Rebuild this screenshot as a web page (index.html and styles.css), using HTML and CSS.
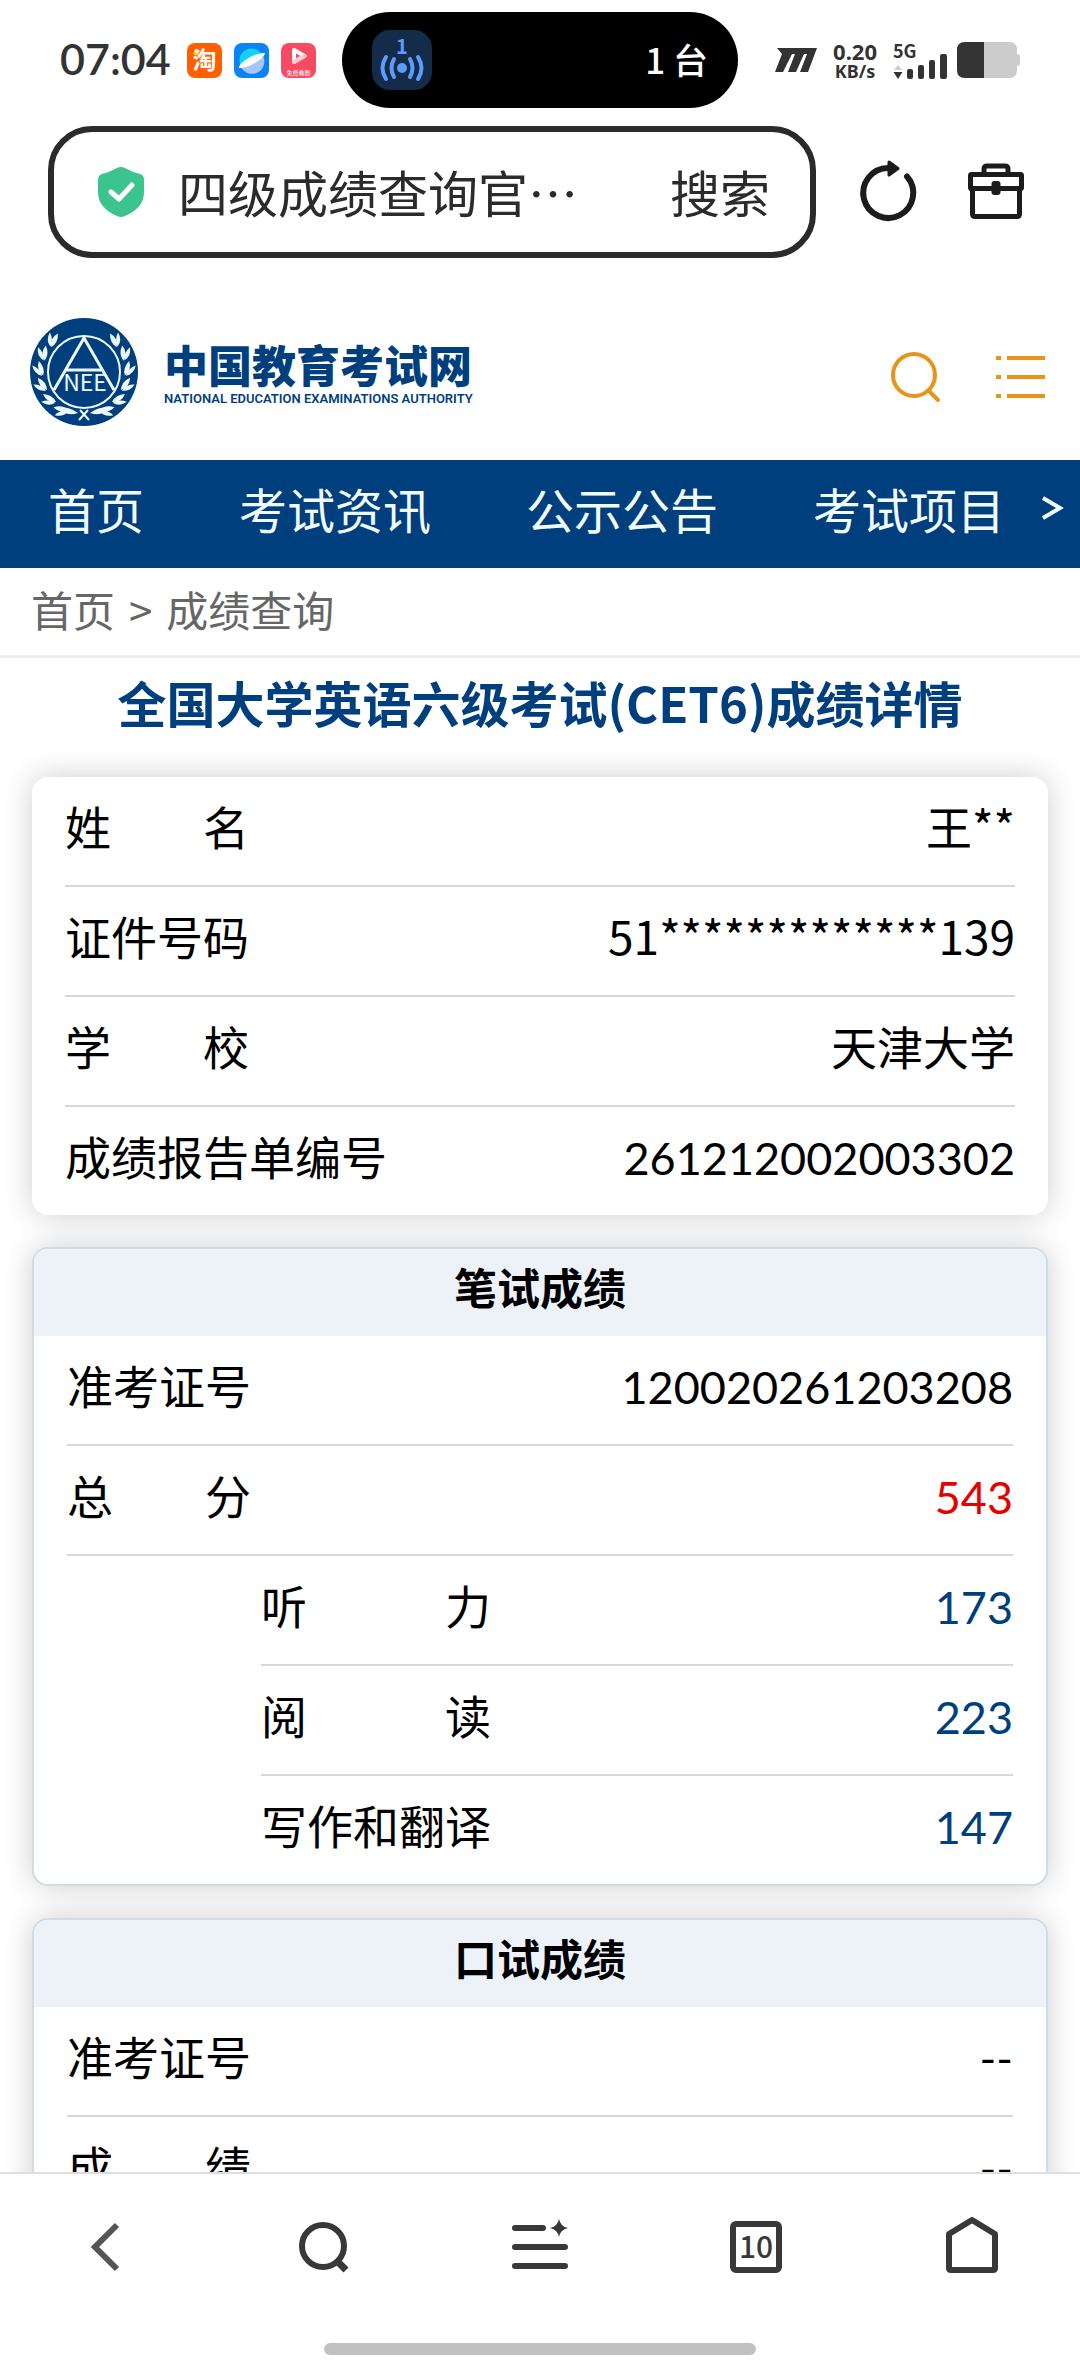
FILE: index.html
```
<!DOCTYPE html>
<html lang="zh-CN">
<head>
    <meta charset="UTF-8">
    <title>成绩查询 - 中国教育考试网</title>
    <meta name="viewport" content="width=device-width, initial-scale=1.0">
    <link rel="stylesheet" href="styles.css">
</head>
<body>
    <!-- =========================
         Phone status bar
    ========================== -->
    <div class="status-bar">
        <div class="status-left">
            <span class="clock">07:04</span>
            <svg class="app-icon" viewBox="0 0 35 35">
                <rect width="35" height="35" rx="8" fill="#ff5f00"/>
                <circle cx="9" cy="10" r="2.5" fill="#ffd400"/>
                <text x="17.5" y="26" font-size="24" font-weight="700" text-anchor="middle" fill="#fff">淘</text>
            </svg>
            <svg class="app-icon" viewBox="0 0 35 35">
                <rect width="35" height="35" rx="8" fill="#0a84f5"/>
                <circle cx="17.5" cy="17.5" r="12" fill="#12d3f5"/>
                <path d="M7 24 L29 13 A12 12 0 0 1 7 24Z" fill="#a4c8fb"/>
                <path d="M5 25 C4 20 22 9 31 10 C31 15 14 26 5 25Z" fill="#fff"/>
            </svg>
            <svg class="app-icon" viewBox="0 0 35 35">
                <rect width="35" height="35" rx="8" fill="#f84a62"/>
                <path d="M13 7 L23.500 13 L13 19Z" fill="none" stroke="#fff" stroke-width="4" stroke-linejoin="round"/>
                <path d="M13 19 L23 13" stroke="#fcc" stroke-width="4" stroke-linecap="round"/>
                <text x="17.5" y="32" font-size="6" text-anchor="middle" fill="#fff">免费看剧</text>
            </svg>
        </div>
        <div class="island">
            <svg class="hotspot" viewBox="0 0 60 60">
                <rect width="60" height="60" rx="18" fill="#142b49"/>
                <text x="30" y="24" font-size="20" font-weight="700" text-anchor="middle" fill="#5b9dfb">1</text>
                <circle cx="30" cy="38" r="5" fill="#5b9dfb"/>
                <g fill="none" stroke="#5b9dfb" stroke-width="4" stroke-linecap="round">
                    <path d="M22 29 Q17 38 22 47"/>
                    <path d="M14 27 Q7 38 14 49"/>
                    <path d="M38 29 Q43 38 38 47"/>
                    <path d="M46 27 Q53 38 46 49"/>
                </g>
            </svg>
            <span>1 台</span>
        </div>
        <div class="status-right">
            <svg class="m-icon" viewBox="0 0 42 24">
                <path d="M2 0 H42 L33 24 H25 L32 6 H29 L21 24 H13 L20 6 H17 L8 24 H0 L7 6Z" fill="#333"/>
            </svg>
            <div class="net-speed"><b>0.20</b><small>KB/s</small></div>
            <div class="signal">
                <small>5G</small>
                <svg viewBox="0 0 54 26">
                    <path d="M5 12 L9 17 H1Z" fill="#ccc"/>
                    <path d="M0.500 19 H9.500 L5 26Z" fill="#333"/>
                    <g fill="#333">
                        <rect x="14" y="16" width="6" height="10" rx="2"/>
                        <rect x="25" y="12" width="6" height="14" rx="2"/>
                        <rect x="36" y="7" width="6" height="19" rx="2"/>
                        <rect x="47" y="1" width="7" height="25" rx="2"/>
                    </g>
                </svg>
            </div>
            <svg class="battery" viewBox="0 0 63 36">
                <path d="M27 0 H52 Q60 0 60 8 V28 Q60 36 52 36 H27Z" fill="#ccc"/>
                <path d="M27 0 H8 Q0 0 0 8 V28 Q0 36 8 36 H27Z" fill="#333"/>
                <path d="M60 12 Q63 12 63 15 V21 Q63 24 60 24Z" fill="#ccc"/>
            </svg>
        </div>
    </div>

    <!-- =========================
         Browser address bar
    ========================== -->
    <form class="address-row" onsubmit="return false">
        <div class="address-box">
            <svg class="shield" viewBox="0 0 46 50">
                <path d="M19 1 Q23 -1 27 1 Q34 5 42 7 Q46 8 46 13 V25 Q46 41 27 49 Q23 51 19 49 Q0 41 0 25 V13 Q0 8 4 7 Q12 5 19 1Z" fill="#3cc48f"/>
                <path d="M13 25 L21 32 L34 18" fill="none" stroke="#fff" stroke-width="5" stroke-linecap="round" stroke-linejoin="round"/>
            </svg>
            <input class="address-input" type="text" value="四级成绩查询官…" aria-label="地址">
            <button class="search-btn" type="submit">搜索</button>
        </div>
        <button class="icon-btn" type="button" aria-label="刷新">
            <svg viewBox="0 0 60 60">
                <path d="M47 14.500 A25 25 0 1 1 28 6" fill="none" stroke="#1c1c1c" stroke-width="6" stroke-linecap="round"/>
                <path d="M29 0 L38 6.500 L29 13Z" fill="#1c1c1c" stroke="#1c1c1c" stroke-width="3" stroke-linejoin="round"/>
            </svg>
        </button>
        <button class="icon-btn" type="button" aria-label="工具箱">
            <svg viewBox="0 0 60 60" fill="none" stroke="#1c1c1c" stroke-width="5" stroke-linejoin="round">
                <path d="M20 12 V7 Q20 4 23 4 H41 Q44 4 44 7 V12"/>
                <rect x="6.500" y="12.500" width="51" height="14" rx="1"/>
                <path d="M8.500 27 V52 Q8.500 54.500 11 54.500 H53 Q55.500 54.500 55.500 52 V27"/>
                <rect x="27.500" y="19" width="9" height="14" rx="3" fill="#1c1c1c" stroke="none"/>
            </svg>
        </button>
    </form>

    <!-- =========================
         Site page
    ========================== -->
    <div class="page">
        <header class="site-header">
            <a class="brand" href="#">
                <svg class="emblem" viewBox="0 0 108 108">
                    <defs>
                        <g id="leaf" fill="#eef8ff">
                            <path d="M54 13 Q60 6 69 10 Q62 16 54 13Z"/>
                            <path d="M54 12 Q56 4 65 3 Q62 10 54 12Z"/>
                        </g>
                        <g id="branch">
                            <use href="#leaf" transform="rotate(22 54 54)"/>
                            <use href="#leaf" transform="rotate(43 54 54)"/>
                            <use href="#leaf" transform="rotate(64 54 54)"/>
                            <use href="#leaf" transform="rotate(85 54 54)"/>
                            <use href="#leaf" transform="rotate(106 54 54)"/>
                            <use href="#leaf" transform="rotate(127 54 54)"/>
                        </g>
                    </defs>
                    <circle cx="54" cy="54" r="54" fill="#003f7e"/>
                    <g transform="matrix(1 0 0 -1 0 108)">
                        <use href="#branch"/>
                        <use href="#branch" transform="matrix(-1 0 0 1 108 0)"/>
                    </g>
                    <g fill="none" stroke="#eef8ff" stroke-width="2">
                        <circle cx="54" cy="54" r="36"/>
                        <path d="M24 72 L54 20 L84 72" stroke-width="3"/>
                        <path d="M36 52 H72" stroke-width="3"/>
                        <path d="M49 102 L58 92 M59 102 L50 92"/>
                    </g>
                    <path d="M28 90 Q38 88 48 95 Q36 99 28 90Z M80 90 Q70 88 60 95 Q72 99 80 90Z" fill="#eef8ff"/>
                    <text x="55" y="73" font-size="23" text-anchor="middle" fill="#eef8ff">NEE</text>
                </svg>
                <span class="brand-text">
                    <span class="brand-cn">中国教育考试网</span>
                    <span class="brand-en">NATIONAL EDUCATION EXAMINATIONS AUTHORITY</span>
                </span>
            </a>
            <div class="header-tools">
                <button class="tool-btn" type="button" aria-label="搜索">
                    <svg viewBox="0 0 50 50" fill="none" stroke="#e8931c" stroke-width="4" stroke-linecap="round">
                        <circle cx="24" cy="23" r="21"/>
                        <path d="M39 39 L48 48"/>
                    </svg>
                </button>
                <button class="tool-btn" type="button" aria-label="菜单">
                    <svg viewBox="0 0 50 50" fill="none" stroke="#e8931c" stroke-width="4">
                        <path d="M0 6 H5 M0 25 H5 M0 44 H5 M11 6 H49 M11 25 H49 M11 44 H49"/>
                    </svg>
                </button>
            </div>
        </header>

        <nav class="site-nav">
            <a href="#">首页</a>
            <a href="#">考试资讯</a>
            <a href="#">公示公告</a>
            <a href="#">考试项目</a>
            <button class="nav-more" type="button" aria-label="更多">
                <svg viewBox="0 0 20 24"><path d="M1 2 L18 12 L1 22" fill="none" stroke="#f2fbff" stroke-width="4"/></svg>
            </button>
        </nav>

        <div class="breadcrumb">
            <a href="#">首页</a>
            <span>&gt;</span>
            <a href="#">成绩查询</a>
        </div>

        <main class="result">
            <h1>全国大学英语六级考试(CET6)成绩详情</h1>

            <dl class="card">
                <div class="row"><dt>姓&#12288;&#12288;名</dt><dd>王**</dd></div>
                <div class="row"><dt>证件号码</dt><dd>51*************139</dd></div>
                <div class="row"><dt>学&#12288;&#12288;校</dt><dd>天津大学</dd></div>
                <div class="row"><dt>成绩报告单编号</dt><dd class="number">261212002003302</dd></div>
            </dl>

            <section class="card card-score">
                <h2>笔试成绩</h2>
                <dl>
                    <div class="row"><dt>准考证号</dt><dd class="number">120020261203208</dd></div>
                    <div class="row"><dt>总&#12288;&#12288;分</dt><dd class="number total">543</dd></div>
                    <div class="row row-sub"><dt>听&#12288;&#12288;&#12288;力</dt><dd class="number">173</dd></div>
                    <div class="row row-sub"><dt>阅&#12288;&#12288;&#12288;读</dt><dd class="number">223</dd></div>
                    <div class="row row-sub"><dt>写作和翻译</dt><dd class="number">147</dd></div>
                </dl>
            </section>

            <section class="card card-score">
                <h2>口试成绩</h2>
                <dl>
                    <div class="row"><dt>准考证号</dt><dd class="number">--</dd></div>
                    <div class="row"><dt>成&#12288;&#12288;绩</dt><dd class="number">--</dd></div>
                </dl>
            </section>
        </main>
    </div>

    <!-- =========================
         Browser toolbar
    ========================== -->
    <footer class="toolbar">
        <div class="toolbar-buttons">
            <button type="button" aria-label="后退">
                <svg viewBox="0 0 60 60"><path d="M39 8 L17 30 L39 52" fill="none" stroke="#555" stroke-width="6"/></svg>
            </button>
            <button type="button" aria-label="搜索">
                <svg viewBox="0 0 60 60" fill="none" stroke="#383838" stroke-width="6">
                    <circle cx="29" cy="29" r="21"/>
                    <path d="M43 44 L52 53" stroke-width="7"/>
                </svg>
            </button>
            <button type="button" aria-label="菜单">
                <svg viewBox="0 0 60 60">
                    <path d="M5 11 H33 M5 30 H55 M5 49 H55" stroke="#383838" stroke-width="6" stroke-linecap="round"/>
                    <path d="M49 2 Q50.500 9.500 58 11 Q50.500 12.500 49 20 Q47.500 12.500 40 11 Q47.500 9.500 49 2Z" fill="#383838"/>
                </svg>
            </button>
            <button type="button" aria-label="标签页">
                <svg viewBox="0 0 60 60">
                    <rect x="7" y="7" width="46" height="46" rx="3" fill="none" stroke="#383838" stroke-width="6"/>
                    <text x="30" y="41" font-size="30" font-weight="500" text-anchor="middle" fill="#383838">10</text>
                </svg>
            </button>
            <button type="button" aria-label="主页">
                <svg viewBox="0 0 60 60">
                    <path d="M7 17 L30 3 L53 17 V51 Q53 53 51 53 H9 Q7 53 7 51Z" fill="none" stroke="#383838" stroke-width="6" stroke-linejoin="round"/>
                </svg>
            </button>
        </div>
        <div class="home-indicator"></div>
    </footer>
</body>
</html>
```
FILE: styles.css
```
/* ====== Base ====== */
* {
    box-sizing: border-box;
}
body {
    margin: 0;
    height: 100vh;
    display: flex;
    flex-direction: column;
    overflow: hidden;
    background: #fff;
    color: #000;
    font-family: "Noto Sans CJK SC", sans-serif;
}
a {
    color: inherit;
    text-decoration: none;
}
button {
    padding: 0;
    border: none;
    background: none;
    color: inherit;
    font: inherit;
}
svg {
    display: block;
    overflow: visible;
}
dl, dd, h1, h2 {
    margin: 0;
}

/* ====== Status bar ====== */
.status-bar {
    display: grid;
    grid-template-columns: 1fr 396px 1fr;
    align-items: center;
    height: 96px;
    margin-top: 12px;
    flex-shrink: 0;
    color: #333;
}
.status-left {
    display: flex;
    align-items: center;
    gap: 12px;
    padding-left: 60px;
}
.clock {
    margin-right: 4px;
    padding-bottom: 3px;
    font-family: Lato, sans-serif;
    font-size: 43px;
    font-weight: 600;
}
.app-icon {
    width: 35px;
    height: 35px;
}
.island {
    display: flex;
    align-items: center;
    justify-content: space-between;
    height: 96px;
    padding: 0 30px;
    border-radius: 48px;
    background: #000;
    color: #fff;
    font-size: 35px;
    font-weight: 500;
}
.island span {
    padding-bottom: 4px;
}
.hotspot {
    width: 60px;
    height: 60px;
}
.status-right {
    display: flex;
    align-items: center;
    justify-content: flex-end;
    padding-right: 60px;
}
.m-icon {
    width: 42px;
    height: 24px;
    margin-right: 16px;
}
.net-speed {
    display: flex;
    flex-direction: column;
    align-items: center;
    margin-right: 16px;
    padding-bottom: 1px;
    font-family: "Noto Sans", sans-serif;
    font-size: 22px;
    line-height: 22px;
}
.net-speed small, .signal small {
    font-size: 18px;
    font-weight: 700;
    line-height: 18px;
}
.signal {
    display: flex;
    flex-direction: column;
    margin-right: 10px;
}
.signal svg {
    width: 54px;
    height: 26px;
    margin-top: -6px;
}
.battery {
    width: 63px;
    height: 36px;
}

/* ====== Address bar ====== */
.address-row {
    display: flex;
    align-items: center;
    gap: 44px;
    padding: 18px 56px 0 48px;
    flex-shrink: 0;
}
.address-box {
    display: flex;
    align-items: center;
    flex: 1;
    min-width: 0;
    height: 132px;
    padding: 0 40px 0 44px;
    border: 6px solid #2b2b2b;
    border-radius: 44px;
    color: #2b2b2b;
    font-size: 50px;
}
.shield {
    width: 46px;
    height: 50px;
    margin-right: 34px;
    flex-shrink: 0;
}
.address-input {
    flex: 1;
    min-width: 0;
    padding: 0 0 3px;
    border: none;
    outline: none;
    background: none;
    color: inherit;
    font: inherit;
}
.search-btn {
    padding-bottom: 3px;
}
.icon-btn, .icon-btn svg {
    width: 60px;
    height: 60px;
}

/* ====== Site header ====== */
.page {
    flex: 1;
    min-height: 0;
    overflow: hidden;
}
.site-header {
    display: flex;
    align-items: center;
    justify-content: space-between;
    padding: 60px 34px 34px 30px;
}
.brand {
    display: flex;
    align-items: center;
    gap: 26px;
    color: #003f7e;
}
.emblem {
    width: 108px;
    height: 108px;
}
.brand-text {
    display: flex;
    flex-direction: column;
}
.brand-cn {
    font-size: 44px;
    font-weight: 900;
    line-height: 54px;
}
.brand-en {
    font-family: Roboto, sans-serif;
    font-size: 13px;
    font-weight: 600;
    line-height: 16px;
}
.header-tools {
    display: flex;
    gap: 56px;
    padding-top: 10px;
}
.tool-btn, .tool-btn svg {
    width: 50px;
    height: 50px;
}

/* ====== Navigation ====== */
.site-nav {
    display: flex;
    align-items: center;
    gap: 95px;
    height: 108px;
    padding: 0 18px 12px 48px;
    background: #003f7e;
    color: #f2fbff;
    font-size: 48px;
    white-space: nowrap;
}
.nav-more {
    margin-left: auto;
}
.nav-more svg {
    width: 20px;
    height: 24px;
}
.site-nav a:last-of-type {
    margin-right: -95px;
}
.breadcrumb {
    display: flex;
    align-items: center;
    gap: 14px;
    height: 90px;
    padding: 0 31px 6px;
    border-bottom: 3px solid #eee;
    color: #666;
    font-size: 42px;
}

/* ====== Result ====== */
.result {
    padding: 0 32px;
}
.result h1 {
    height: 119px;
    color: #003f7e;
    font-size: 49px;
    line-height: 88px;
    text-align: center;
    white-space: nowrap;
}
.card {
    margin-bottom: 32px;
    padding: 0 33px;
    border-radius: 16px;
    background: #fff;
    box-shadow: 0 0 30px rgba(0, 0, 0, 0.2);
}
.card-score {
    padding: 0;
    border: 2px solid #cfdde8;
    overflow: hidden;
}
.card-score h2 {
    height: 87px;
    background: #edf2f9;
    font-size: 43px;
    line-height: 74px;
    text-align: center;
}
.card-score dl {
    padding: 0 33px;
}
.row {
    display: flex;
    align-items: baseline;
    justify-content: space-between;
    height: 110px;
    border-bottom: 2px solid #d8d8d8;
    font-size: 46px;
    line-height: 97px;
}
.row:last-child {
    height: 108px;
    border-bottom: none;
}
.number {
    font-family: Lato, sans-serif;
    font-size: 45px;
}
.row-sub {
    margin-left: 194px;
}
.row-sub dd {
    color: #003f7e;
}
.row .total {
    color: #e60000;
}

/* ====== Toolbar ====== */
.toolbar {
    flex-shrink: 0;
    padding-bottom: 21px;
    border-top: 2px solid #ddd;
    background: #fff;
}
.toolbar-buttons {
    display: flex;
    height: 146px;
    margin-bottom: 23px;
}
.toolbar-buttons button {
    display: flex;
    flex: 1;
    align-items: center;
    justify-content: center;
}
.toolbar-buttons svg {
    width: 60px;
    height: 60px;
}
.home-indicator {
    width: 40%;
    height: 12px;
    margin: 0 auto;
    border-radius: 6px;
    background: #c1c1c1;
}
```
